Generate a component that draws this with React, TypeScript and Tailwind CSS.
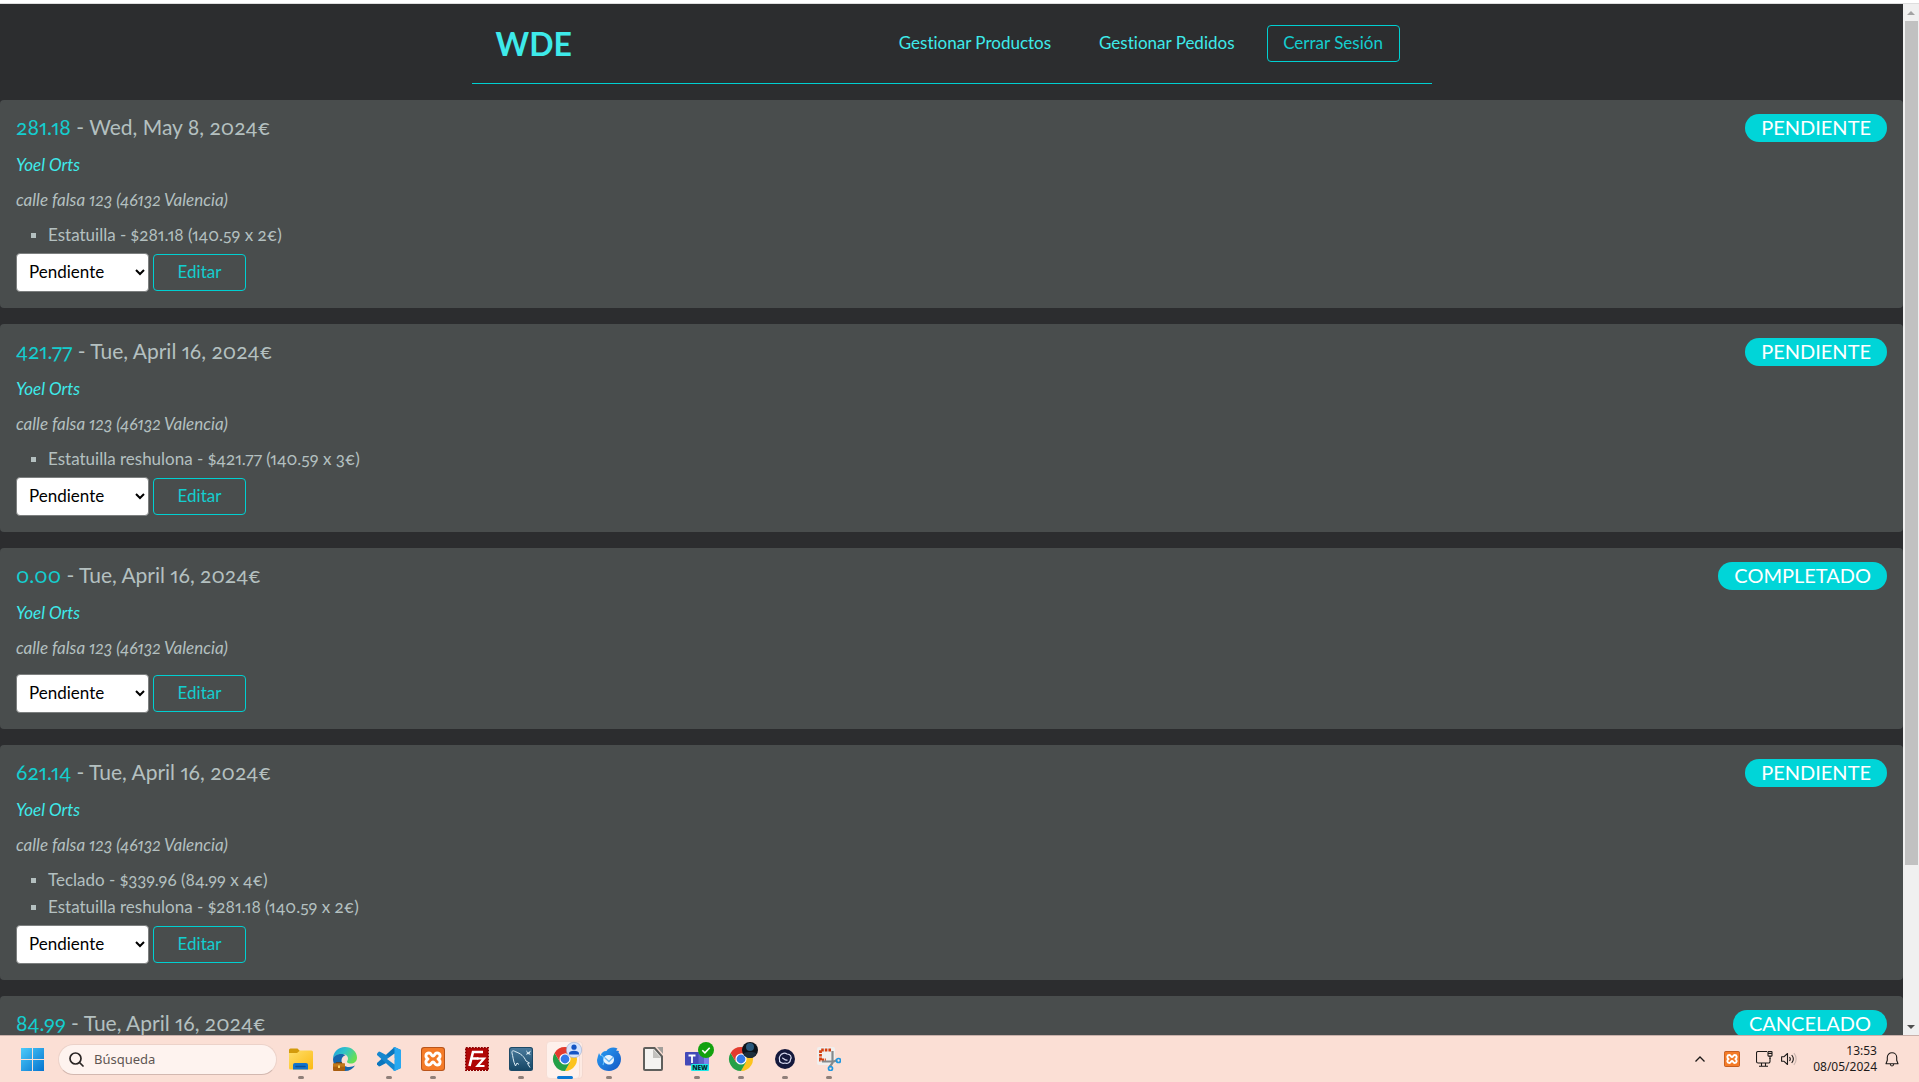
import type { ReactNode } from 'react';

type Order = {
  total: string;
  date: string;
  status: string;
  items: string[];
};

const orders: Order[] = [
  { total: '281.18', date: 'Wed, May 8, 2024€', status: 'PENDIENTE', items: ['Estatuilla - $281.18 (140.59 x 2€)'] },
  { total: '421.77', date: 'Tue, April 16, 2024€', status: 'PENDIENTE', items: ['Estatuilla reshulona - $421.77 (140.59 x 3€)'] },
  { total: '0.00', date: 'Tue, April 16, 2024€', status: 'COMPLETADO', items: [] },
  {
    total: '621.14',
    date: 'Tue, April 16, 2024€',
    status: 'PENDIENTE',
    items: ['Teclado - $339.96 (84.99 x 4€)', 'Estatuilla reshulona - $281.18 (140.59 x 2€)'],
  },
  { total: '84.99', date: 'Tue, April 16, 2024€', status: 'CANCELADO', items: [] },
];

function Header() {
  return (
    <header className="mx-auto mb-4 flex w-full max-w-[960px] items-center justify-between border-b border-[#00cfd1] py-[21px] pr-8 pl-6">
      <a href="#inicio" className="text-[32px] leading-9 font-bold text-[#3eeaea]">
        WDE
      </a>
      <nav className="flex items-center gap-8 leading-6 text-[#3eeaea]">
        <div className="flex gap-12 pb-0.5">
          <a href="#productos">Gestionar Productos</a>
          <a href="#pedidos">Gestionar Pedidos</a>
        </div>
        <button
          type="button"
          className="h-[37px] w-[133px] rounded border border-[#00cfd1] pb-0.5 text-center text-[#14cdcf]"
        >
          Cerrar Sesión
        </button>
      </nav>
    </header>
  );
}

function OrderCard({ order, index }: { order: Order; index: number }) {
  const hasItems = order.items.length > 0;
  return (
    <article className="rounded bg-[#494d4d] px-4 pt-[14px] pb-4">
      <div className="flex items-center justify-between">
        <h2 className="pb-0.5 text-[21px] leading-[26px]">
          <span className="text-[#14cdcf]">{order.total}</span> - {order.date}
        </h2>
        <span className="rounded-full bg-[#00d5d8] px-4 pb-0.5 text-[20px] leading-[26px] text-white">
          {order.status}
        </span>
      </div>
      <p className="mt-[9px] text-[#3eeaea] italic">Yoel Orts</p>
      <p className="mt-2 italic">calle falsa 123 (46132 Valencia)</p>
      {hasItems && (
        <ul className="mt-2 list-none pl-[15px]">
          {order.items.map((item) => (
            <li key={item} className="relative pl-[17px]">
              <span className="absolute top-[12px] left-0 size-[5px] bg-[#b4c0c0]" />
              {item}
            </li>
          ))}
        </ul>
      )}
      <div className={hasItems ? 'mt-[5px] flex items-center gap-1' : 'mt-[13px] flex items-center gap-1'}>
        <select
          id={`estado-${index}`}
          aria-label="Estado del pedido"
          defaultValue="Pendiente"
          className="h-[39px] w-[133px] rounded border border-[#7c7f7f] bg-white pb-0.5 pl-2 text-[17px] text-black"
        >
          <option>Pendiente</option>
          <option>Completado</option>
          <option>Cancelado</option>
        </select>
        <button
          type="button"
          className="h-[37px] w-[93px] rounded border border-[#00cfd1] pb-0.5 text-center leading-6 text-[#14cdcf]"
        >
          Editar
        </button>
      </div>
    </article>
  );
}

function Scrollbar() {
  return (
    <div className="flex w-4 shrink-0 flex-col items-center bg-[#f0f0f0]">
      <div className="flex h-[17px] items-center">
        <svg width="8" height="4" viewBox="0 0 8 4" fill="#a3a3a3">
          <path d="M4 0 8 4H0z" />
        </svg>
      </div>
      <div className="w-[13px] grow-[11] bg-[#c1c1c1]" />
      <div className="grow-[2]" />
      <div className="flex h-[17px] items-center">
        <svg width="8" height="4" viewBox="0 0 8 4" fill="#505050">
          <path d="M0 0h8L4 4z" />
        </svg>
      </div>
    </div>
  );
}

function FolderIcon() {
  return (
    <svg width="24" height="24" viewBox="0 0 24 24">
      <defs>
        <linearGradient id="folder" x1="0" y1="0" x2="1" y2="1">
          <stop offset="0" stopColor="#ffdf6b" />
          <stop offset="1" stopColor="#fbba12" />
        </linearGradient>
      </defs>
      <path d="M0 3a1.5 1.5 0 0 1 1.5-1.5h7L11 4v5H0z" fill="#d39b0c" />
      <path d="M0 6h8l3-2.500h11.500A1.500 1.500 0 0 1 24 5v16a1.500 1.500 0 0 1-1.500 1.500h-21A1.500 1.500 0 0 1 0 21z" fill="url(#folder)" />
      <path d="M4 22.500V18a2 2 0 0 1 2-2h11a2 2 0 0 1 2 2v4.500z" fill="#1173cb" />
      <path d="M7 19.500h9" stroke="#0b5095" strokeWidth="1.500" strokeLinecap="round" />
    </svg>
  );
}

function EdgeIcon() {
  return (
    <svg width="24" height="24" viewBox="0 0 24 24">
      <defs>
        <linearGradient id="edge-top" x1="0" y1="0" x2="1" y2="0.500">
          <stop offset="0" stopColor="#1b9de2" />
          <stop offset="0.500" stopColor="#31c4c7" />
          <stop offset="1" stopColor="#66df55" />
        </linearGradient>
      </defs>
      <path d="M0 12C0 5 5 0 12 0s12 5 12 10.500c0 4-3 6-6 6-2.500 0-4-.8-4-1.800 0-.7 1-1.300 1-3.200C15 9 12.500 7 9.500 7 5 7 1 9 0 12z" fill="url(#edge-top)" />
      <path d="M0 12c1-3.500 4.500-5 8-5 2 0 3.500.5 4.500 1.300C10 9 8.500 11 8.500 13.500c0 4 3.500 6.500 7.500 6.500 2.500 0 4.500-.8 6-1.500-2 3.500-5.500 5.500-10 5.500C5 24 0 19 0 12z" fill="#1465ae" />
      <path d="M3.500 17v-1.200h5V17" fill="none" stroke="#6f3d08" strokeWidth="1.200" />
      <rect x="0" y="16.500" width="12" height="7.500" rx="1" fill="#a85d0e" />
      <path d="M0 16.500h12v3.200H0z" fill="#c27818" />
      <rect x="5" y="18.500" width="2" height="2.500" fill="#ffd56a" />
    </svg>
  );
}

function VsCodeIcon() {
  return (
    <svg width="24" height="24" viewBox="0 0 24 24">
      <path d="M17.500 0 24 3v5L3.500 19 2 19.500 0 17.500v-1.500z" fill="#0b76bd" />
      <path d="M17.500 24 24 21v-5L3.500 5 2 4.500 0 6.500V8z" fill="#1587cf" />
      <path d="M17.500 0 24 3v18l-6.500 3-1.500-.8 1.500-.7V1.500L16 .8z" fill="#29a8f0" />
      <path d="M17.500 6.500v11L10 12z" fill="#fbdfd5" />
    </svg>
  );
}

function XamppIcon({ size }: { size: number }) {
  return (
    <svg width={size} height={size} viewBox="0 0 24 24">
      <rect width="24" height="24" rx="3" fill="#b9551b" />
      <rect x="1" y="1" width="22" height="22" rx="2.500" fill="#f47b28" />
      <path
        d="M8 6C4.500 6 3.800 10.200 7 12c-3.200 1.800-2.500 6 1 6 2.600 0 2.200-3 4-3s1.400 3 4 3c3.500 0 4.200-4.200 1-6 3.200-1.800 2.500-6-1-6-2.600 0-2.200 3-4 3S10.600 6 8 6z"
        fill="none"
        stroke="#fff"
        strokeWidth="2.900"
        strokeLinejoin="round"
      />
    </svg>
  );
}

function FileZillaIcon() {
  return (
    <svg width="24" height="24" viewBox="0 0 24 24">
      <rect x="1" y="1" width="22" height="22" fill="#b00606" />
      <rect x="0.800" y="0.800" width="22.400" height="22.400" fill="none" stroke="#8c0303" strokeWidth="1.600" strokeDasharray="2 1" />
      <g fill="none" stroke="#fff" strokeWidth="2.600">
        <path d="M4.500 19 8 5h10M6.500 11.500h7" />
        <path d="M12 11.500h7L12.500 19h7" strokeWidth="2.200" />
      </g>
    </svg>
  );
}

function WorkbenchIcon() {
  return (
    <svg width="24" height="24" viewBox="0 0 24 24">
      <defs>
        <linearGradient id="workbench" x1="0" y1="0" x2="0" y2="1">
          <stop offset="0" stopColor="#4a7a9c" />
          <stop offset="1" stopColor="#164766" />
        </linearGradient>
      </defs>
      <rect width="24" height="24" rx="2.500" fill="#1d4a67" />
      <rect x="1" y="1" width="22" height="22" rx="2" fill="url(#workbench)" />
      <path d="M6.500 19C4 14 4 9 3 6c-.5-2 1-3 3-1.500 6 2 9 5 11 9.500l3.500 2-2 .5 2.500 4M6.500 19l1.500-3 2 1.500" fill="none" stroke="#dcecf4" strokeWidth="1" />
      <path d="m17 3 2 2.500 3-2-1.500 3L22 8l-3-1-2 1 1-2z" fill="#dcecf4" />
    </svg>
  );
}

function ChromeIcon({ badge }: { badge: ReactNode }) {
  return (
    <svg width="24" height="24" viewBox="0 0 24 24" className="overflow-visible">
      <path d="M12 6.500h10.700A12 12 0 0 1 12 24l4.800-9.200z" fill="#fcc31e" />
      <path d="M1.600 6A12 12 0 0 0 12 24l5-9-10 0z" fill="#23a047" />
      <path d="M1.600 6A12 12 0 0 1 22.600 6.500H12l-5 8.400z" fill="#e33b2e" />
      <circle cx="12" cy="12" r="5.600" fill="#fff" />
      <circle cx="12" cy="12" r="4.400" fill="#3479e8" />
      {badge}
    </svg>
  );
}

function ProfileBadge() {
  return (
    <g>
      <circle cx="21" cy="3" r="7.700" fill="#d5e3fc" stroke="#8d9cc0" strokeWidth="0.500" />
      <circle cx="21" cy="0.200" r="2.600" fill="#1555c4" />
      <path d="M16 7.500V6.500c0-2 2-2.800 5-2.800s5 .8 5 2.800v1z" fill="#1555c4" />
    </g>
  );
}

function PhotoBadge() {
  return (
    <g>
      <circle cx="21" cy="3" r="8" fill="#0d141b" />
      <circle cx="21" cy="0" r="4" fill="#28587c" />
      <path d="M14.500 6c3-1.500 10-1.500 13 0-1 3-3.500 5-6.500 5s-5.500-2-6.500-5z" fill="#1c2f3d" />
    </g>
  );
}

function ThunderbirdIcon() {
  return (
    <svg width="24" height="24" viewBox="0 0 24 24">
      <defs>
        <linearGradient id="thunder" x1="0" y1="0" x2="1" y2="1">
          <stop offset="0" stopColor="#2ba0f5" />
          <stop offset="1" stopColor="#1457c4" />
        </linearGradient>
      </defs>
      <path d="M1 9 0 13c0 6.500 5.500 11 12 11s12-5 12-12c0-3-1-5-2.500-6.500L22 4l-3-.5 1.500-2C16-.5 11 1 9.500 4 6 4 4 6 3.500 9L2 6z" fill="url(#thunder)" />
      <path d="M4 8c3 1 4 5 2 10" fill="none" stroke="#63c2ff" strokeWidth="1.200" />
      <path d="M6.500 12c.5-2.500 2.500-4 5-4s5.500 1.500 5.500 4.500-2 5-5 5-6-2.500-5.500-5.500z" fill="#e8f4ff" />
      <path d="m7.500 10.500 4.500 4 4.500-4.500" fill="none" stroke="#6fb6ef" strokeWidth="1.300" />
    </svg>
  );
}

function LibreOfficeIcon() {
  return (
    <svg width="24" height="24" viewBox="0 0 24 24">
      <path d="M4 0h10l8 9v13a2 2 0 0 1-2 2H4a2 2 0 0 1-2-2V2a2 2 0 0 1 2-2z" fill="#5f5f5c" />
      <path d="M4 2h9l7 8v12H4z" fill="#f4f3f1" />
      <path d="M12 2v9h8z" fill="#c2c1be" />
      <path d="M16 0h6v7z" fill="#a29f9b" />
    </svg>
  );
}

function TeamsIcon() {
  return (
    <svg width="24" height="24" viewBox="0 0 24 24" className="overflow-visible">
      <rect x="12" y="6" width="12" height="14" rx="2" fill="#7b83eb" />
      <rect x="8" y="5" width="11" height="15" rx="2" fill="#5b62c9" />
      <rect x="0" y="5" width="13.500" height="13.500" rx="1" fill="#4349b8" />
      <path d="M3.500 8.500h7M7 8.500v7.500" stroke="#fff" strokeWidth="1.800" />
      <circle cx="21" cy="3" r="8" fill="#13a10e" />
      <path d="m17.300 3.200 2.600 2.600 4.800-5" fill="none" stroke="#fff" strokeWidth="1.600" />
      <rect x="6" y="17" width="18" height="7" rx="1" fill="#1ce6e6" />
      <text x="15" y="23" textAnchor="middle" fontFamily="Open Sans, sans-serif" fontSize="6.500" fontWeight="800" fill="#062b33">
        NEW
      </text>
    </svg>
  );
}

function OrbIcon() {
  return (
    <svg width="24" height="24" viewBox="0 0 24 24">
      <circle cx="12" cy="12" r="10" fill="#14193c" />
      <path d="M7 9c1.500-3 5-3.500 7-2 3.500 0 5 3 3.500 5.500 0 3-3 4.500-5.500 3.500-3.500 1-6-1-5.500-3.500-.5-1.500-.2-2.500.5-3.500z" fill="none" stroke="#d7daf0" strokeWidth="1.200" />
      <path d="M9 11c2 0 2.500 3 5.500 2" fill="none" stroke="#d7daf0" strokeWidth="1.200" />
    </svg>
  );
}

function SnippingIcon() {
  return (
    <svg width="24" height="24" viewBox="0 0 24 24">
      <rect x="0" y="0" width="18" height="18" rx="2" fill="#f0efee" />
      <path d="M14 3H3.500v10H9" fill="none" stroke="#d6400f" strokeWidth="2.800" strokeDasharray="2.600 1" />
      <path d="M15.500 4v12l-3 4M5 14.500h12l3-1.500" fill="none" stroke="#85898c" strokeWidth="2.200" />
      <circle cx="21.500" cy="13.500" r="2" fill="none" stroke="#1f97e0" strokeWidth="1.700" />
      <circle cx="13.500" cy="21.500" r="2" fill="none" stroke="#1f97e0" strokeWidth="1.700" />
    </svg>
  );
}

type Task = { name: string; icon: ReactNode; state: 'idle' | 'running' | 'active' };

const tasks: Task[] = [
  { name: 'Explorador de archivos', icon: <FolderIcon />, state: 'running' },
  { name: 'Microsoft Edge', icon: <EdgeIcon />, state: 'idle' },
  { name: 'Visual Studio Code', icon: <VsCodeIcon />, state: 'running' },
  { name: 'XAMPP', icon: <XamppIcon size={24} />, state: 'running' },
  { name: 'FileZilla', icon: <FileZillaIcon />, state: 'idle' },
  { name: 'MySQL Workbench', icon: <WorkbenchIcon />, state: 'running' },
  { name: 'Google Chrome', icon: <ChromeIcon badge={<ProfileBadge />} />, state: 'active' },
  { name: 'Thunderbird', icon: <ThunderbirdIcon />, state: 'running' },
  { name: 'LibreOffice', icon: <LibreOfficeIcon />, state: 'idle' },
  { name: 'Microsoft Teams', icon: <TeamsIcon />, state: 'running' },
  { name: 'Google Chrome (perfil 2)', icon: <ChromeIcon badge={<PhotoBadge />} />, state: 'running' },
  { name: 'Termius', icon: <OrbIcon />, state: 'running' },
  { name: 'Recortes', icon: <SnippingIcon />, state: 'running' },
];

function TaskButton({ task }: { task: Task }) {
  const active = task.state === 'active';
  return (
    <button
      type="button"
      aria-label={task.name}
      className="relative flex h-[47px] w-11 items-center justify-center"
    >
      {active && (
        <>
          <span className="absolute top-[5px] left-[6px] h-[38px] w-[34px] rounded border border-[#f3d9d0] bg-[#fdeae3]" />
          <span className="absolute top-[5px] left-[3px] h-[38px] w-[34px] rounded border border-[#f6ddd4] bg-[#fef1ec]" />
        </>
      )}
      <span className="relative">{task.icon}</span>
      {task.state === 'running' && <span className="absolute bottom-1 left-[19px] h-[3px] w-[6px] rounded-full bg-[#8f7f79]" />}
      {active && <span className="absolute bottom-1 left-[14px] h-[3px] w-4 rounded-full bg-[#0a78d4]" />}
    </button>
  );
}

function Taskbar() {
  return (
    <footer className="flex h-[47px] shrink-0 items-center justify-between border-t border-[#c9b0aa] bg-[#fbdfd5] font-['Noto_Sans',sans-serif] [font-feature-settings:normal]">
      <div className="flex items-center pl-[21px]">
        <button type="button" aria-label="Inicio" className="mr-[14px]">
          <svg width="23" height="23" viewBox="0 0 23 23">
            <defs>
              <linearGradient id="win" x1="0" y1="0" x2="1" y2="1">
                <stop offset="0" stopColor="#4ccbfa" />
                <stop offset="1" stopColor="#0573cf" />
              </linearGradient>
            </defs>
            <path d="M0 0h11v11H0zM12 0h11v11H12zM0 12h11v11H0zM12 12h11v11H12z" fill="url(#win)" />
          </svg>
        </button>
        <label className="mr-[2px] flex h-[31px] w-[219px] items-center rounded-full border border-[#ecd2c9] border-b-[#d3b8b0] bg-[#fef3ef] pl-[10px]">
          <svg width="15" height="15" viewBox="0 0 15 15" fill="none" stroke="#2b2625" strokeWidth="1.700" strokeLinecap="round">
            <circle cx="6.500" cy="6.500" r="5.500" />
            <path d="m10.500 10.500 3.500 3.500" />
          </svg>
          <input
            type="text"
            aria-label="Búsqueda"
            placeholder="Búsqueda"
            className="ml-[10px] w-40 bg-transparent text-[13px] leading-5 text-[#5f5653] outline-none placeholder:text-[#5f5653]"
          />
        </label>
        <div className="flex">
          {tasks.map((task) => (
            <TaskButton key={task.name} task={task} />
          ))}
        </div>
      </div>

      <div className="flex items-center pr-5 text-[#1d1a19]">
        <svg width="10" height="6" viewBox="0 0 10 6" fill="none" stroke="currentColor" strokeWidth="1.300" className="mr-[19px]">
          <path d="M.5 5.500 5 1l4.500 4.500" />
        </svg>
        <span className="mr-4">
          <XamppIcon size={16} />
        </span>
        <svg width="17" height="16" viewBox="0 0 17 16" fill="none" stroke="currentColor" strokeWidth="1.100" className="mr-2">
          <path d="M11 .5H2A1.500 1.500 0 0 0 .5 2v8.500A1.500 1.500 0 0 0 2 12h10.500a1.500 1.500 0 0 0 1.500-1.500V7M5.500 12v3M9.500 12v3M3 15.300h9" />
          <rect x="12" y="0.600" width="4" height="4.500" rx="0.500" />
          <path d="M12 2.500h4M14 5v3" />
        </svg>
        <svg width="16" height="14" viewBox="0 0 16 14" fill="none" stroke="currentColor" strokeWidth="1.100" strokeLinejoin="round">
          <path d="M.6 4.800v4.400h2.200L6.500 12.500v-11L2.800 4.800z" />
          <path d="M8.500 5c1 1.200 1 2.800 0 4M10.700 3c2 2.400 2 5.600 0 8" />
          <path d="M12.900 1.200c3 3.400 3 8.200 0 11.600" stroke="#c9b5ae" />
        </svg>
        <div className="ml-4 text-right text-[12px] leading-4">
          <div>13:53</div>
          <div>08/05/2024</div>
        </div>
        <svg width="14" height="15" viewBox="0 0 14 15" fill="none" stroke="currentColor" strokeWidth="1.100" strokeLinejoin="round" className="ml-2">
          <path d="M7 .7C4.300.7 2.300 2.700 2.300 5.300v3L1 11.800h12l-1.300-3.500v-3C11.700 2.700 9.700.7 7 .7zM5.200 12c.2 1.300.9 2 1.800 2s1.600-.7 1.800-2" />
        </svg>
      </div>
    </footer>
  );
}

export default function App() {
  return (
    <div className="flex h-screen flex-col overflow-hidden border-t-[3px] border-white bg-[#2c2d2f] font-['Lato',sans-serif] text-[17px] leading-[27px] text-[#b4c0c0] [font-feature-settings:'liga'_0,'onum','pnum']">
      <div className="flex min-h-0 flex-1 border-t border-[#dedede]">
        <main className="flex min-w-0 flex-1 flex-col overflow-hidden">
          <Header />
          <div className="flex flex-col gap-4">
            {orders.map((order, index) => (
              <OrderCard key={index} order={order} index={index} />
            ))}
          </div>
        </main>
        <Scrollbar />
      </div>
      <Taskbar />
    </div>
  );
}
